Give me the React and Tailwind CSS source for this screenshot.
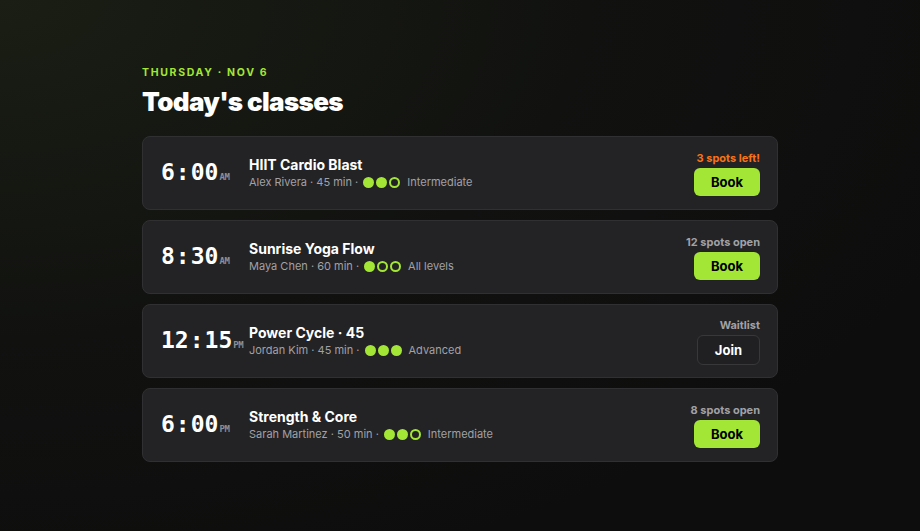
const classes = [
  {
    time: "6:00",
    period: "AM",
    name: "HIIT Cardio Blast",
    coach: "Alex Rivera",
    length: "45 min",
    level: 2,
    levelName: "Intermediate",
    status: "3 spots left!",
    urgent: true,
    action: "Book",
  },
  {
    time: "8:30",
    period: "AM",
    name: "Sunrise Yoga Flow",
    coach: "Maya Chen",
    length: "60 min",
    level: 1,
    levelName: "All levels",
    status: "12 spots open",
    action: "Book",
  },
  {
    time: "12:15",
    period: "PM",
    name: "Power Cycle · 45",
    coach: "Jordan Kim",
    length: "45 min",
    level: 3,
    levelName: "Advanced",
    status: "Waitlist",
    action: "Join",
  },
  {
    time: "6:00",
    period: "PM",
    name: "Strength & Core",
    coach: "Sarah Martinez",
    length: "50 min",
    level: 2,
    levelName: "Intermediate",
    status: "8 spots open",
    action: "Book",
  },
];

const Dots = ({ level }) => (
  <span className="flex items-center gap-[2px] mx-[5px]">
    {[1, 2, 3].map((n) => (
      <span
        key={n}
        className={`w-[11px] h-[11px] rounded-full ${
          n <= level ? "bg-[#a3e635]" : "border-2 border-[#a3e635]"
        }`}
      />
    ))}
  </span>
);

const ClassCard = ({ item }) => {
  const [h, m] = item.time.split(":");
  return (
    <div className="flex items-center bg-[#232325] border border-[#303033] rounded-lg pl-[18px] pr-[17px] h-[74px]">
      {/* TIME */}
      <div className="w-[76px] shrink-0 flex items-baseline whitespace-nowrap text-white font-['DejaVu_Sans_Mono',monospace] font-bold">
        <span className="text-[23px] leading-none">
          {h}
          <span className="mx-[1px]">:</span>
          {m}
        </span>
        <span className="text-[9px] text-[#8e8e93] ml-[1px] tracking-tighter">
          {item.period}
        </span>
      </div>

      {/* INFO */}
      <div className="ml-3 flex-1 min-w-0">
        <p className="text-[14px] font-bold text-white leading-tight">
          {item.name}
        </p>
        <div className="mt-[1px] flex items-center text-[11px] text-[#a1a1a6]">
          <span>
            {item.coach} · {item.length} ·
          </span>
          <Dots level={item.level} />
          <span className="ml-[2px]">{item.levelName}</span>
        </div>
      </div>

      {/* ACTION */}
      <div className="flex flex-col items-end">
        <p
          className={`text-[11px] font-bold mb-[2px] ${
            item.urgent ? "text-[#f97316]" : "text-[#a1a1a6]"
          }`}
        >
          {item.status}
        </p>
        {item.action === "Book" ? (
          <button className="h-[28px] px-[17px] rounded-md bg-[#a3e635] text-black text-[13px] font-bold">
            Book
          </button>
        ) : (
          <button className="h-[30px] px-[17px] rounded-md border border-[#38383b] bg-[#202022] text-white text-[13px] font-bold">
            Join
          </button>
        )}
      </div>
    </div>
  );
};

export default function App() {
  return (
    <div className="min-h-screen flex items-center justify-center bg-[#0e0e0e] bg-[radial-gradient(ellipse_at_top_left,#1a1e14_0%,#111210_45%,#0d0d0d_80%)] font-['Inter','Noto_Sans',sans-serif]">
      <section className="w-[636px] pb-1">
        <p className="text-[10.5px] font-bold tracking-[0.16em] text-[#a3e635]">
          THURSDAY · NOV 6
        </p>
        <h1 className="mt-[5px] text-[26px] font-black tracking-tight text-white leading-tight">
          Today's classes
        </h1>

        <div className="mt-[18px] flex flex-col gap-[10px]">
          {classes.map((item, index) => (
            <ClassCard key={index} item={item} />
          ))}
        </div>
      </section>
    </div>
  );
}
